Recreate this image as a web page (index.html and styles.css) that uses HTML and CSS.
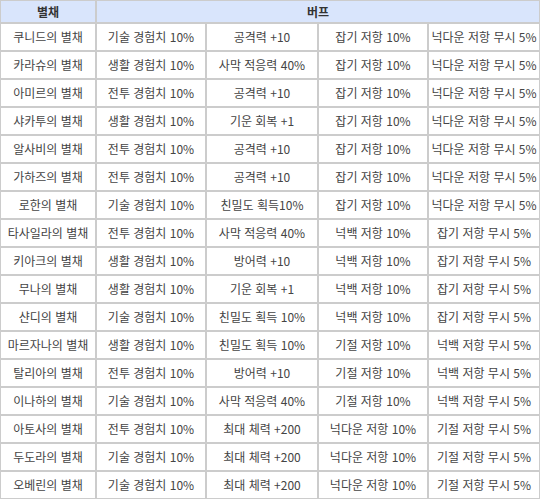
FILE: index.html
```html
<!DOCTYPE html>
<html lang="ko">
<head>
<meta charset="utf-8">
<title>별채 버프</title>
<link rel="stylesheet" href="styles.css">
</head>
<body>
<table class="buff-table">
  <colgroup>
    <col class="c1"><col class="c2"><col class="c3"><col class="c4"><col class="c5">
  </colgroup>
  <thead>
    <tr><th>별채</th><th colspan="4">버프</th></tr>
  </thead>
  <tbody>
    <tr><td>쿠니드의 별채</td><td>기술 경험치 10%</td><td>공격력 +10</td><td>잡기 저항 10%</td><td>넉다운 저항 무시 5%</td></tr>
    <tr><td>카라슈의 별채</td><td>생활 경험치 10%</td><td>사막 적응력 40%</td><td>잡기 저항 10%</td><td>넉다운 저항 무시 5%</td></tr>
    <tr><td>아미르의 별채</td><td>전투 경험치 10%</td><td>공격력 +10</td><td>잡기 저항 10%</td><td>넉다운 저항 무시 5%</td></tr>
    <tr><td>샤카투의 별채</td><td>생활 경험치 10%</td><td>기운 회복 +1</td><td>잡기 저항 10%</td><td>넉다운 저항 무시 5%</td></tr>
    <tr><td>알사비의 별채</td><td>전투 경험치 10%</td><td>공격력 +10</td><td>잡기 저항 10%</td><td>넉다운 저항 무시 5%</td></tr>
    <tr><td>가하즈의 별채</td><td>전투 경험치 10%</td><td>공격력 +10</td><td>잡기 저항 10%</td><td>넉다운 저항 무시 5%</td></tr>
    <tr><td>로한의 별채</td><td>기술 경험치 10%</td><td>친밀도 획득10%</td><td>잡기 저항 10%</td><td>넉다운 저항 무시 5%</td></tr>
    <tr><td>타사일라의 별채</td><td>전투 경험치 10%</td><td>사막 적응력 40%</td><td>넉백 저항 10%</td><td>잡기 저항 무시 5%</td></tr>
    <tr><td>키아크의 별채</td><td>생활 경험치 10%</td><td>방어력 +10</td><td>넉백 저항 10%</td><td>잡기 저항 무시 5%</td></tr>
    <tr><td>무나의 별채</td><td>생활 경험치 10%</td><td>기운 회복 +1</td><td>넉백 저항 10%</td><td>잡기 저항 무시 5%</td></tr>
    <tr><td>샨디의 별채</td><td>기술 경험치 10%</td><td>친밀도 획득 10%</td><td>넉백 저항 10%</td><td>잡기 저항 무시 5%</td></tr>
    <tr><td>마르자나의 별채</td><td>생활 경험치 10%</td><td>친밀도 획득 10%</td><td>기절 저항 10%</td><td>넉백 저항 무시 5%</td></tr>
    <tr><td>탈리아의 별채</td><td>전투 경험치 10%</td><td>방어력 +10</td><td>기절 저항 10%</td><td>넉백 저항 무시 5%</td></tr>
    <tr><td>이나하의 별채</td><td>기술 경험치 10%</td><td>사막 적응력 40%</td><td>기절 저항 10%</td><td>넉백 저항 무시 5%</td></tr>
    <tr><td>아토사의 별채</td><td>전투 경험치 10%</td><td>최대 체력 +200</td><td>넉다운 저항 10%</td><td>기절 저항 무시 5%</td></tr>
    <tr><td>두도라의 별채</td><td>기술 경험치 10%</td><td>최대 체력 +200</td><td>넉다운 저항 10%</td><td>기절 저항 무시 5%</td></tr>
    <tr><td>오베린의 별채</td><td>기술 경험치 10%</td><td>최대 체력 +200</td><td>넉다운 저항 10%</td><td>기절 저항 무시 5%</td></tr>
  </tbody>
</table>
</body>
</html>
```
FILE: styles.css
```css
html, body {
  margin: 0;
  padding: 0;
  background: #ffffff;
}

.buff-table {
  width: 540px;
  table-layout: fixed;
  border-collapse: separate;
  border-spacing: 0;
  font-family: "Noto Sans CJK KR", "Noto Sans", sans-serif;
  font-size: 12px;
  color: #444444;
}

.c1 { width: 96px; }
.c2 { width: 110px; }
.c3 { width: 112px; }
.c4 { width: 110px; }
.c5 { width: 112px; }

.buff-table th,
.buff-table td {
  box-sizing: border-box;
  border: 1px solid #cccccc;
  padding: 0;
  text-align: center;
  white-space: nowrap;
  overflow: hidden;
}

.buff-table th {
  height: 23px;
  line-height: 21px;
  background: #d9e5fc;
  font-weight: bold;
  color: #333333;
  font-size: 12px;
}

.buff-table td {
  height: 28px;
  line-height: 26px;
}
```
